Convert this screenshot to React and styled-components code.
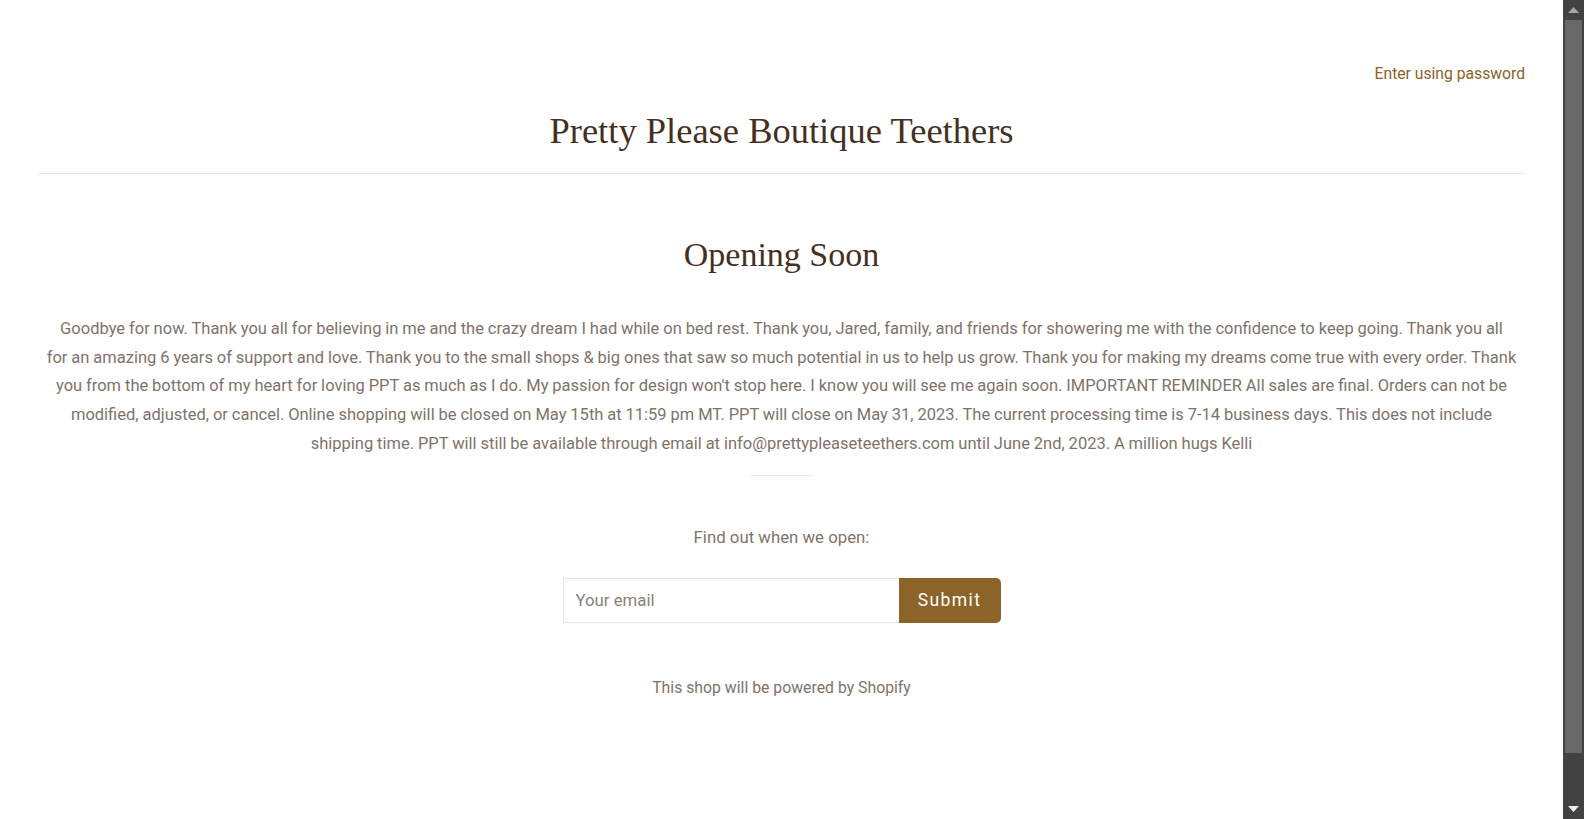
import styled, { createGlobalStyle } from 'styled-components';

const GlobalStyle = createGlobalStyle`
  html, body {
    margin: 0;
    padding: 0;
    height: 100%;
    overflow: hidden;
    background: #ffffff;
  }
  body {
    font-family: Roboto, "Liberation Sans", sans-serif;
    color: #7f7369;
  }
`;

const Shell = styled.div`
  display: flex;
  height: 100vh;
`;

const Page = styled.div`
  flex: 1;
  min-width: 0;
  padding: 60px 38px 0;
  box-sizing: border-box;
  overflow: hidden;
`;

// window scrollbar as it shows in the screenshot
const ScrollTrack = styled.aside`
  width: 21px;
  display: flex;
  flex-direction: column;
  align-items: center;
  background: #424242;
`;

const ScrollArrow = styled.div`
  height: 20px;
  display: flex;
  align-items: center;
  justify-content: center;
  svg {
    display: block;
  }
`;

const ScrollThumb = styled.div`
  width: 17px;
  height: 733px;
  background: #686868;
`;

const ScrollGap = styled.div`
  flex: 1;
`;

const Header = styled.header`
  border-bottom: 1px solid #e8e8e8;
  padding-bottom: 21px;
`;

const PasswordLink = styled.div`
  text-align: right;
  font-size: 15.7px;
  line-height: 28px;
  color: #8c6329;
`;

const ShopName = styled.h1`
  margin: 21px 0 0;
  text-align: center;
  font-family: "Liberation Serif", "DejaVu Serif", serif;
  font-weight: 400;
  font-size: 36.5px;
  line-height: 43px;
  color: #44301f;
`;

const Main = styled.main`
  display: flex;
  flex-direction: column;
  align-items: center;
  padding-top: 60px;
  text-align: center;
`;

const Heading = styled.h2`
  margin: 0;
  font-family: "Liberation Serif", "DejaVu Serif", serif;
  font-weight: 400;
  font-size: 34px;
  line-height: 41px;
  color: #44301f;
`;

const Message = styled.p`
  margin: 40px 0 0;
  font-size: 16.5px;
  word-spacing: -0.2px;
  line-height: 28.7px;
`;

const ShortRule = styled.hr`
  width: 63px;
  margin: 16px 0 0;
  border: 0;
  border-top: 1px solid #e8e8e8;
`;

const Prompt = styled.p`
  margin: 47px 0 0;
  font-size: 16.8px;
  line-height: 28px;
`;

const Form = styled.form`
  display: flex;
  margin-top: 27px;
  height: 45px;
`;

const EmailInput = styled.input`
  width: 336px;
  box-sizing: border-box;
  border: 1px solid #e6e6e6;
  border-right: 0;
  padding: 0 12px;
  font-family: Roboto, "Liberation Sans", sans-serif;
  font-size: 16.8px;
  color: #7f7369;
  outline: none;
  &::placeholder {
    color: #8b8079;
  }
`;

const SubmitButton = styled.button`
  width: 102px;
  border: 0;
  border-radius: 0 5px 5px 0;
  background: #8c6329;
  color: #ffffff;
  font-family: Roboto, "Liberation Sans", sans-serif;
  font-size: 17.5px;
  font-weight: 400;
  letter-spacing: 1.4px;
  cursor: pointer;
`;

const PoweredBy = styled.p`
  margin: 51px 0 0;
  font-size: 15.8px;
  line-height: 28px;
`;

const Arrow = ({ up, color }) => (
  <svg width="11" height="6" viewBox="0 0 11 6">
    <path d={up ? 'M0 6 L5.5 0 L11 6 Z' : 'M0 0 L5.5 6 L11 0 Z'} fill={color} />
  </svg>
);

export default function App() {
  return (
    <Shell>
      <GlobalStyle />
      <Page>
        <Header>
          <PasswordLink>Enter using password</PasswordLink>
          <ShopName>Pretty Please Boutique Teethers</ShopName>
        </Header>
        <Main>
          <Heading>Opening Soon</Heading>
          <Message>
            Goodbye for now. Thank you all for believing in me and the crazy dream I had while on bed rest. Thank you, Jared, family, and friends for showering me with the confidence to keep going. Thank you all<br />
            for an amazing 6 years of support and love. Thank you to the small shops &amp; big ones that saw so much potential in us to help us grow. Thank you for making my dreams come true with every order. Thank<br />
            you from the bottom of my heart for loving PPT as much as I do. My passion for design won't stop here. I know you will see me again soon. IMPORTANT REMINDER All sales are final. Orders can not be<br />
            modified, adjusted, or cancel. Online shopping will be closed on May 15th at 11:59 pm MT. PPT will close on May 31, 2023. The current processing time is 7-14 business days. This does not include<br />
            shipping time. PPT will still be available through email at info@prettypleaseteethers.com until June 2nd, 2023. A million hugs Kelli
          </Message>
          <ShortRule />
          <Prompt>Find out when we open:</Prompt>
          <Form onSubmit={(e) => e.preventDefault()}>
            <EmailInput type="email" placeholder="Your email" />
            <SubmitButton type="submit">Submit</SubmitButton>
          </Form>
          <PoweredBy>This shop will be powered by Shopify</PoweredBy>
        </Main>
      </Page>
      <ScrollTrack>
        <ScrollArrow>
          <Arrow up color="#a3a3a3" />
        </ScrollArrow>
        <ScrollThumb />
        <ScrollGap />
        <ScrollArrow>
          <Arrow color="#ececec" />
        </ScrollArrow>
      </ScrollTrack>
    </Shell>
  );
}
